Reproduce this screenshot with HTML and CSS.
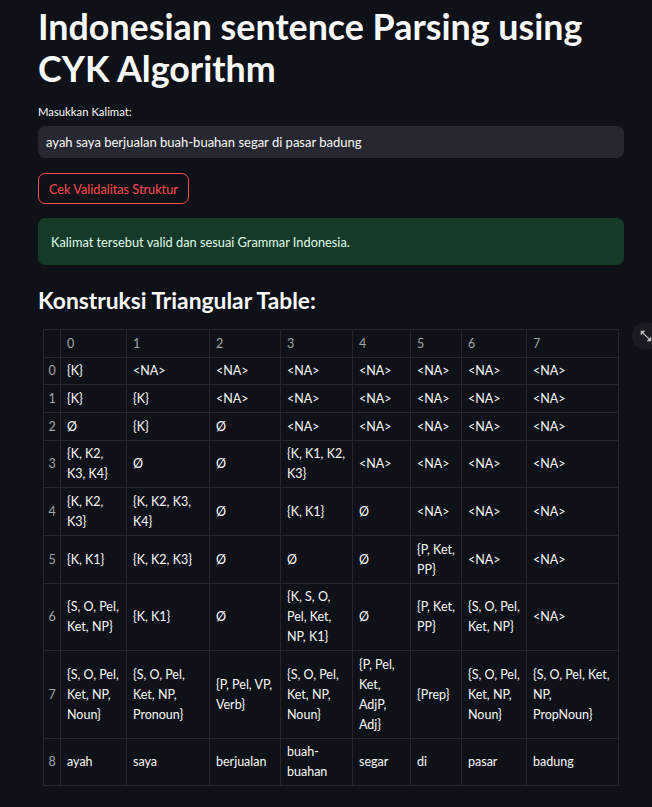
FILE: index.html
```html
<!DOCTYPE html>
<html lang="id">
<head>
<meta charset="utf-8">
<title>CYK Parser</title>
<link rel="stylesheet" href="styles.css">
</head>
<body>
<div class="app">
  <h1 class="title">Indonesian sentence Parsing using CYK Algorithm</h1>
  <label class="field-label">Masukkan Kalimat:</label>
  <div class="text-input">ayah saya berjualan buah-buahan segar di pasar badung</div>
  <button class="btn">Cek Validalitas Struktur</button>
  <div class="alert-success">Kalimat tersebut valid dan sesuai Grammar Indonesia.</div>
  <h2 class="subtitle">Konstruksi Triangular Table:</h2>
  <div class="grid-wrap">
    <table class="grid">
      <colgroup>
        <col class="c-idx"><col class="c0"><col class="c1"><col class="c2"><col class="c3"><col class="c4"><col class="c5"><col class="c6"><col class="c7">
      </colgroup>
      <thead>
        <tr class="h28"><th></th><th>0</th><th>1</th><th>2</th><th>3</th><th>4</th><th>5</th><th>6</th><th>7</th></tr>
      </thead>
      <tbody>
        <tr class="h27"><th>0</th><td>{K}</td><td>&lt;NA&gt;</td><td>&lt;NA&gt;</td><td>&lt;NA&gt;</td><td>&lt;NA&gt;</td><td>&lt;NA&gt;</td><td>&lt;NA&gt;</td><td>&lt;NA&gt;</td></tr>
        <tr class="h28"><th>1</th><td>{K}</td><td>{K}</td><td>&lt;NA&gt;</td><td>&lt;NA&gt;</td><td>&lt;NA&gt;</td><td>&lt;NA&gt;</td><td>&lt;NA&gt;</td><td>&lt;NA&gt;</td></tr>
        <tr class="h28"><th>2</th><td>Ø</td><td>{K}</td><td>Ø</td><td>&lt;NA&gt;</td><td>&lt;NA&gt;</td><td>&lt;NA&gt;</td><td>&lt;NA&gt;</td><td>&lt;NA&gt;</td></tr>
        <tr class="h47"><th>3</th><td>{K, K2,<br>K3, K4}</td><td>Ø</td><td>Ø</td><td>{K, K1, K2,<br>K3}</td><td>&lt;NA&gt;</td><td>&lt;NA&gt;</td><td>&lt;NA&gt;</td><td>&lt;NA&gt;</td></tr>
        <tr class="h48"><th>4</th><td>{K, K2,<br>K3}</td><td>{K, K2, K3,<br>K4}</td><td>Ø</td><td>{K, K1}</td><td>Ø</td><td>&lt;NA&gt;</td><td>&lt;NA&gt;</td><td>&lt;NA&gt;</td></tr>
        <tr class="h48"><th>5</th><td>{K, K1}</td><td>{K, K2, K3}</td><td>Ø</td><td>Ø</td><td>Ø</td><td>{P, Ket,<br>PP}</td><td>&lt;NA&gt;</td><td>&lt;NA&gt;</td></tr>
        <tr class="h67"><th>6</th><td>{S, O, Pel,<br>Ket, NP}</td><td>{K, K1}</td><td>Ø</td><td>{K, S, O,<br>Pel, Ket,<br>NP, K1}</td><td>Ø</td><td>{P, Ket,<br>PP}</td><td>{S, O, Pel,<br>Ket, NP}</td><td>&lt;NA&gt;</td></tr>
        <tr class="h88"><th>7</th><td>{S, O, Pel,<br>Ket, NP,<br>Noun}</td><td>{S, O, Pel,<br>Ket, NP,<br>Pronoun}</td><td>{P, Pel, VP,<br>Verb}</td><td>{S, O, Pel,<br>Ket, NP,<br>Noun}</td><td>{P, Pel,<br>Ket,<br>AdjP,<br>Adj}</td><td>{Prep}</td><td>{S, O, Pel,<br>Ket, NP,<br>Noun}</td><td>{S, O, Pel, Ket,<br>NP,<br>PropNoun}</td></tr>
        <tr class="h47"><th>8</th><td>ayah</td><td>saya</td><td>berjualan</td><td>buah-<br>buahan</td><td>segar</td><td>di</td><td>pasar</td><td>badung</td></tr>
      </tbody>
    </table>
    <div class="fullscreen-btn">
      <svg viewBox="0 0 24 24" width="14" height="14" aria-hidden="true"><path fill="currentColor" d="M3 3h8l-3.29 3.29 10 10L21 13v8h-8l3.29-3.29-10-10L3 11z"/></svg>
    </div>
  </div>
</div>
</body>
</html>
```

FILE: styles.css
```css
html, body {
  margin: 0;
  padding: 0;
  background: #0e1117;
}
body {
  color: #fafafa;
  font-family: "Lato", "Noto Sans", sans-serif;
  width: 652px;
  height: 807px;
  overflow: hidden;
}
.app {
  padding: 0 28px 0 38px;
  display: flex;
  flex-direction: column;
  align-items: flex-start;
}
.title {
  margin: 6px 0 0;
  font-size: 35.8px;
  line-height: 42px;
  font-weight: 700;
  letter-spacing: 0;
  width: 586px;
}
.field-label {
  margin-top: 14px;
  font-size: 11.3px;
  line-height: 16px;
  color: #fafafa;
}
.text-input {
  margin-top: 6px;
  box-sizing: border-box;
  width: 586px;
  height: 32px;
  background: #262730;
  border-radius: 7px;
  padding: 0 8px;
  display: flex;
  align-items: center;
  font-size: 13px;
  color: #fafafa;
}
.btn {
  margin-top: 15px;
  height: 31px;
  box-sizing: border-box;
  padding: 0 10px;
  background: transparent;
  border: 1px solid #ff4b4b;
  border-radius: 7px;
  color: #ff4b4b;
  font-family: inherit;
  font-size: 12.7px;
}
.alert-success {
  margin-top: 14px;
  box-sizing: border-box;
  width: 586px;
  height: 47px;
  padding: 0 13px;
  display: flex;
  align-items: center;
  background: #173928;
  border-radius: 7px;
  color: #dffde9;
  font-size: 12.8px;
}
.subtitle {
  margin: 21px 0 0;
  font-size: 22.8px;
  line-height: 28px;
  font-weight: 700;
}
.grid-wrap {
  margin-top: 15px;
  margin-left: 5px;
  position: relative;
}
.grid {
  border-collapse: collapse;
  table-layout: fixed;
  width: 575px;
  font-size: 12.5px;
  line-height: 20px;
}
.c-idx { width: 17px; }
.c0 { width: 66px; }
.c1 { width: 83px; }
.c2 { width: 71px; }
.c3 { width: 72px; }
.c4 { width: 58px; }
.c5 { width: 51px; }
.c6 { width: 65px; }
.c7 { width: 92px; }
.grid th, .grid td {
  border: 1px solid #25272d;
  padding: 0 6px;
  text-align: left;
  vertical-align: middle;
  white-space: nowrap;
  overflow: hidden;
  box-sizing: border-box;
}
.grid th {
  font-weight: 400;
  color: #a3a5a8;
}
.grid tbody th {
  text-align: center;
  padding: 0;
}
.h27 { height: 27px; }
.h28 { height: 28px; }
.h47 { height: 47px; }
.h48 { height: 48px; }
.h67 { height: 67px; }
.h88 { height: 88px; }
.fullscreen-btn {
  position: absolute;
  top: -7px;
  left: 589px;
  width: 28px;
  height: 28px;
  border-radius: 50%;
  background: #1a1c23;
  color: #bfc1c4;
  display: flex;
  align-items: center;
  justify-content: center;
}
```
